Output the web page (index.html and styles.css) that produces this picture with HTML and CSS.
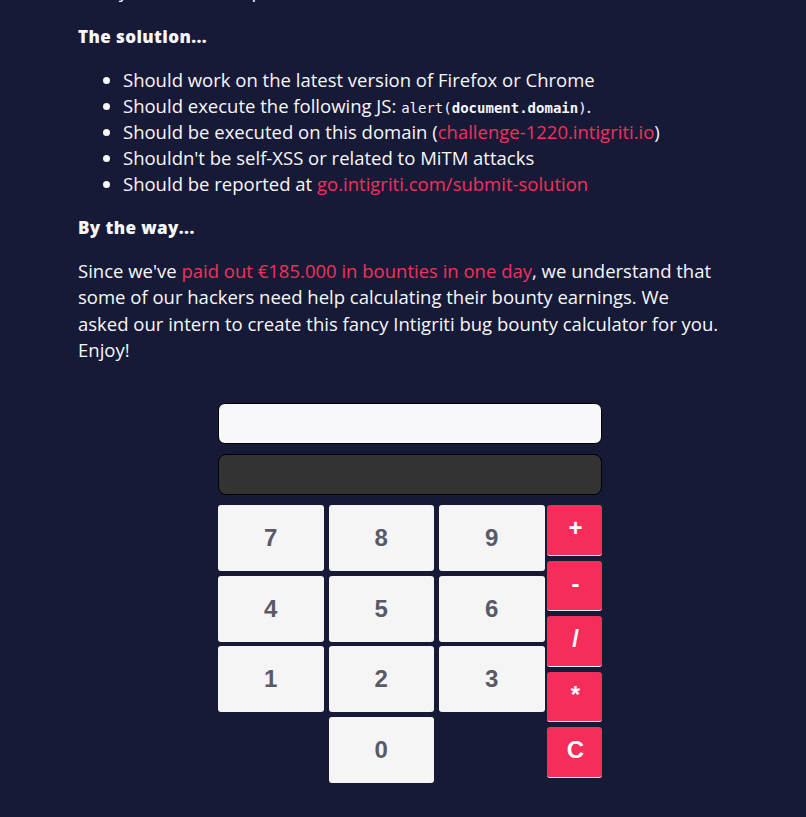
FILE: index.html
```html
<!DOCTYPE html>
<html lang="en">
<head>
<meta charset="utf-8">
<title>Intigriti challenge</title>
<link rel="stylesheet" href="styles.css">
</head>
<body>
<main class="page">
  <p class="intro">Test your luck, then post it here and have fun</p>
  <h3 class="heading heading-first">The solution...</h3>
  <ul class="rules">
    <li>Should work on the latest version of Firefox or Chrome</li>
    <li>Should execute the following JS: <code>alert(<b>document.domain</b>)</code>.</li>
    <li>Should be executed on this domain (<a href="#">challenge-1220.intigriti.io</a>)</li>
    <li>Shouldn't be self-XSS or related to MiTM attacks</li>
    <li>Should be reported at <a href="#">go.intigriti.com/submit-solution</a></li>
  </ul>
  <h3 class="heading">By the way...</h3>
  <p class="text">Since we've <a href="#">paid out €185.000 in bounties in one day</a>, we understand that some of our hackers need help calculating their bounty earnings. We asked our intern to create this fancy Intigriti bug bounty calculator for you. Enjoy!</p>

  <section class="calc">
    <input class="screen screen-in" type="text" readonly>
    <input class="screen screen-out" type="text" readonly>
    <div class="pad">
      <div class="digits">
        <button class="key">7</button>
        <button class="key">8</button>
        <button class="key">9</button>
        <button class="key">4</button>
        <button class="key">5</button>
        <button class="key">6</button>
        <button class="key">1</button>
        <button class="key">2</button>
        <button class="key">3</button>
        <button class="key key-zero">0</button>
      </div>
      <div class="ops">
        <button class="op">+</button>
        <button class="op">-</button>
        <button class="op">/</button>
        <button class="op">*</button>
        <button class="op">C</button>
      </div>
    </div>
  </section>
</main>
</body>
</html>
```

FILE: styles.css
```css
html, body {
  margin: 0;
  padding: 0;
  background: #161a36;
  overflow: hidden;
}

body {
  color: #f7f7fa;
  font-family: "Open Sans", "Noto Sans", sans-serif;
  font-size: 18.5px;
}

.page {
  width: 650px;
  margin: 0 auto;
}

.intro {
  margin: -22px 0 0;
  line-height: 26px;
}

.heading {
  margin: 18px 0 0;
  font-size: 17px;
  font-weight: 800;
  letter-spacing: 0.4px;
  line-height: 26px;
}

.heading-first {
  margin-top: 20px;
}

.rules {
  margin: 17px 0 0;
  padding-left: 45px;
  line-height: 26px;
}

.rules li {
  height: 26px;
}

code {
  font-family: "DejaVu Sans Mono", monospace;
  font-size: 14px;
  line-height: 1;
}

a {
  color: #f2305d;
  text-decoration: none;
}

.text {
  margin: 17px 7px 0 0;
  line-height: 26.3px;
}

.calc {
  width: 384px;
  margin: 40px 0 0 140px;
  display: flex;
  flex-direction: column;
}

.screen {
  box-sizing: border-box;
  width: 384px;
  height: 41px;
  border: 1px solid #000;
  margin: 0;
  padding: 0 10px;
  outline: none;
}

.screen-in {
  background: #f8f8fa;
  border-radius: 7px;
}

.screen-out {
  background: #333333;
  border-radius: 8px;
  margin-top: 10px;
}

.pad {
  display: flex;
  gap: 2px;
  margin-top: 10px;
}

.digits {
  display: grid;
  grid-template-columns: 105.5px 105.5px 105.5px;
  grid-auto-rows: 66px;
  gap: 4.5px 5px;
}

.key {
  background: #f5f5f5;
  border: none;
  border-radius: 3px;
  color: #5a5968;
  font-family: "Liberation Sans", Arial, sans-serif;
  font-weight: 700;
  font-size: 24px;
  padding: 0;
}

.key-zero {
  grid-column: 2;
}

.ops {
  display: flex;
  flex-direction: column;
  gap: 5px;
}

.op {
  width: 55px;
  height: 50.5px;
  box-sizing: border-box;
  background: #f62d5b;
  border: none;
  border-bottom: 1px solid #f4f4f6;
  border-radius: 3px;
  color: #fff;
  font-family: "Liberation Sans", Arial, sans-serif;
  font-weight: 700;
  font-size: 24px;
  padding: 0 0 3px 3px;
}
```
